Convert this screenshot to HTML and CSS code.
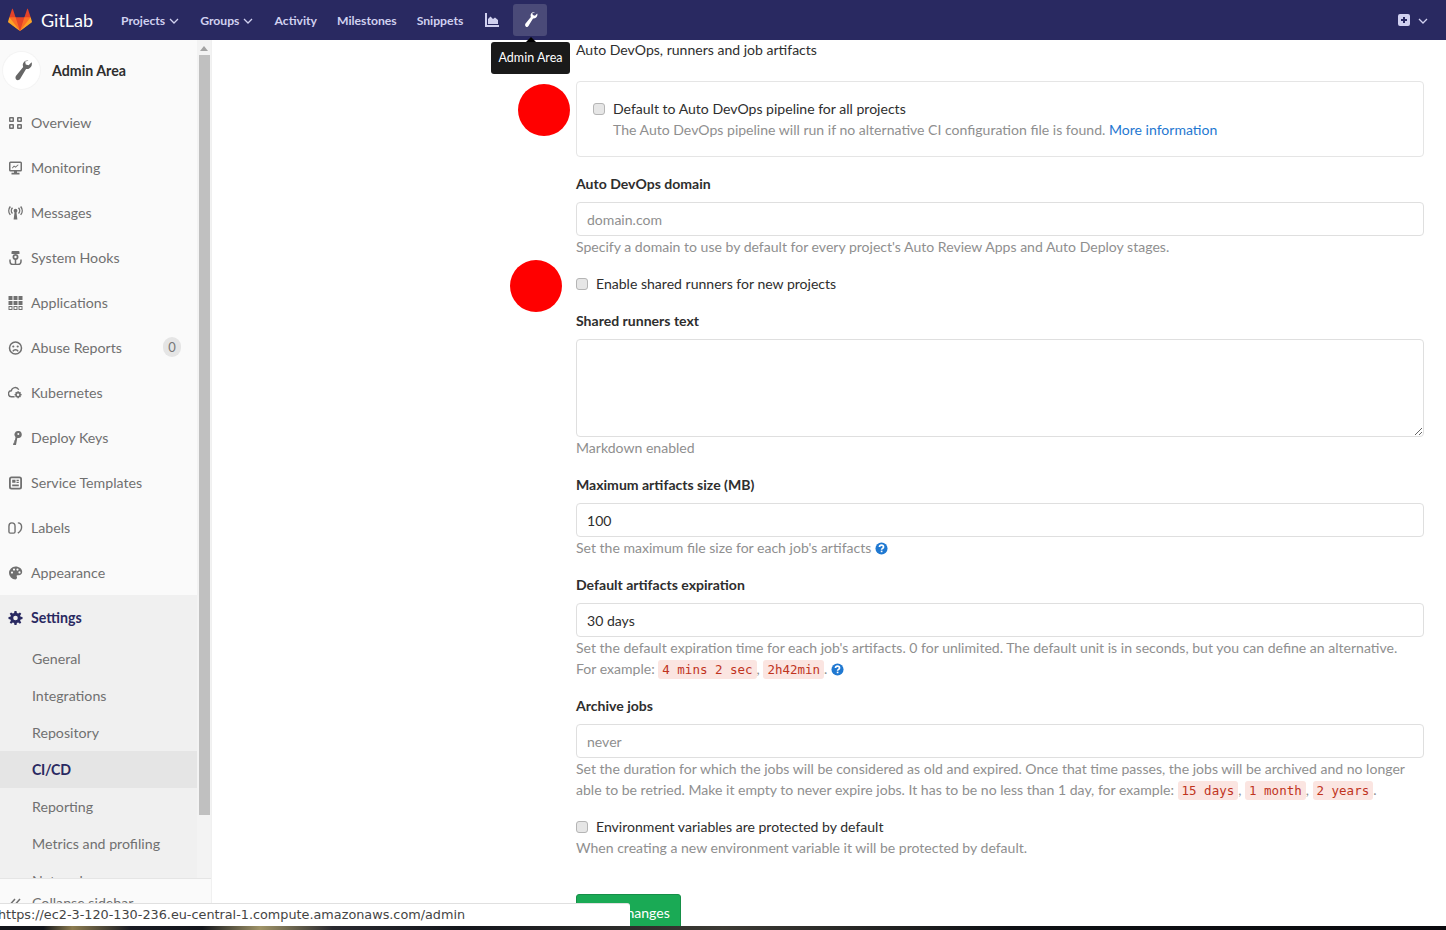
FILE: index.html
```html
<!DOCTYPE html>
<html lang="en">
<head>
    <meta charset="UTF-8">
    <title>Settings · CI/CD · Admin Area · GitLab</title>
    <link rel="stylesheet" href="styles.css">
</head>
<body>
    <header class="navbar">
        <a class="brand">
            <svg class="tanuki" viewBox="0 0 36 36">
                <path fill="#e24329" d="M2 14l9.38 9v-9l-4-12.28c-.205-.632-1.176-.632-1.38 0z"/>
                <path fill="#e24329" d="M34 14l-9.38 9v-9l4-12.28c.205-.632 1.176-.632 1.38 0z"/>
                <path fill="#e24329" d="M18,34.38 3,14 33,14 Z"/>
                <path fill="#fc6d26" d="M18,34.38 11.38,14 2,14 6,25Z"/>
                <path fill="#fc6d26" d="M18,34.38 24.62,14 34,14 30,25Z"/>
                <path fill="#fca326" d="M2 14L.1 20.16c-.18.565 0 1.2.5 1.56l17.42 12.66z"/>
                <path fill="#fca326" d="M34 14l1.9 6.16c.18.565 0 1.2-.5 1.56L18 34.38z"/>
            </svg>
            <span>GitLab</span>
        </a>
        <nav class="nav-links">
            <a class="nav-drop">Projects <svg class="caret" viewBox="0 0 10 6"><path d="M1 1l4 4 4-4"/></svg></a>
            <a class="nav-drop">Groups <svg class="caret" viewBox="0 0 10 6"><path d="M1 1l4 4 4-4"/></svg></a>
            <a>Activity</a>
            <a>Milestones</a>
            <a>Snippets</a>
            <a class="nav-chart">
                <svg viewBox="0 0 14 14"><path d="M0 0h2v12h12v2H0z"/><path d="M3 11V6l2.500-2.500L8 6l2-1.500 3 2.500v4z"/></svg>
            </a>
            <a class="nav-admin">
                <svg viewBox="0 0 16 16"><path d="M12.300 1.100c-1.900-.5-3.700.9-3.800 2.800 0 .5.100 1 .3 1.400L4.600 10.500c-.6.700-1.100 1.300-.9 2.300.2 1.100 1.400 1.700 2.300 1.100.7-.4 1-1.100 1.400-1.800l3.300-5.400c1.700.2 3.400-.900 3.800-2.600.2-.7.100-1.300-.1-1.900l-2 2-1.900-.6-.4-1.900z"/></svg>
            </a>
        </nav>
        <a class="nav-new">
            <svg class="plus" viewBox="0 0 12 12"><path fill-rule="evenodd" d="M2 0h8a2 2 0 0 1 2 2v8a2 2 0 0 1-2 2H2a2 2 0 0 1-2-2V2a2 2 0 0 1 2-2zm3 3v2H3v2h2v2h2V7h2V5H7V3z"/></svg>
            <svg class="caret" viewBox="0 0 10 6"><path d="M1 1l4 4 4-4"/></svg>
        </a>
    </header>

    <div class="page">
        <aside class="sidebar">
            <div class="sidebar-scroll">
                <div class="sidebar-list">
                    <div class="context">
                        <span class="context-avatar">
                            <svg viewBox="0 0 16 16"><path d="M12.300 1.100c-1.900-.5-3.700.9-3.800 2.800 0 .5.100 1 .3 1.400L4.600 10.500c-.6.700-1.100 1.300-.9 2.300.2 1.100 1.400 1.700 2.300 1.100.7-.4 1-1.100 1.400-1.800l3.300-5.400c1.700.2 3.400-.900 3.800-2.600.2-.7.100-1.300-.1-1.900l-2 2-1.900-.6-.4-1.900z"/></svg>
                        </span>
                        <strong>Admin Area</strong>
                    </div>
                    <a class="side-item">
                        <svg viewBox="0 0 14 14"><path fill-rule="evenodd" d="M1.500 1h3a1 1 0 0 1 1 1v3a1 1 0 0 1-1 1h-3a1 1 0 0 1-1-1V2a1 1 0 0 1 1-1zm.5 1.500v2h2v-2zM9.500 1h3a1 1 0 0 1 1 1v3a1 1 0 0 1-1 1h-3a1 1 0 0 1-1-1V2a1 1 0 0 1 1-1zm.5 1.500v2h2v-2zM1.500 8h3a1 1 0 0 1 1 1v3a1 1 0 0 1-1 1h-3a1 1 0 0 1-1-1V9a1 1 0 0 1 1-1zm.5 1.500v2h2v-2zM9.500 8h3a1 1 0 0 1 1 1v3a1 1 0 0 1-1 1h-3a1 1 0 0 1-1-1V9a1 1 0 0 1 1-1zm.5 1.500v2h2v-2z"/></svg>
                        Overview
                    </a>
                    <a class="side-item">
                        <svg viewBox="0 0 14 14"><path fill-rule="evenodd" d="M2 .5h10a1.500 1.500 0 0 1 1.500 1.500v7a1.500 1.500 0 0 1-1.500 1.500H8.500v1.300H11V13.500H3v-1.700h2.500v-1.300H2A1.500 1.500 0 0 1 .5 9V2A1.500 1.500 0 0 1 2 .5zm0 1.500v7h10V2z"/><path d="M3.500 6.800l2-2.200 1.500 1 2.500-2.200.6.700-3 2.700-1.500-1-1.500 1.700z"/></svg>
                        Monitoring
                    </a>
                    <a class="side-item">
                        <svg viewBox="0 0 16 14"><circle cx="8" cy="4.500" r="2"/><path d="M7 6h2l1 8H6z"/><path class="line" d="M4.800 1.500a4.300 4.300 0 0 0 0 6M11.200 1.500a4.300 4.300 0 0 1 0 6M2.500 0a7 7 0 0 0 0 9M13.500 0a7 7 0 0 1 0 9"/></svg>
                        Messages
                    </a>
                    <a class="side-item">
                        <svg viewBox="0 0 14 14"><path d="M4 0h6a1 1 0 0 1 1 1v2H3V1a1 1 0 0 1 1-1z"/><path fill-rule="evenodd" d="M7 3a3 3 0 1 1 0 6 3 3 0 0 1 0-6zm0 1.800a1.200 1.200 0 1 0 0 2.400 1.200 1.200 0 0 0 0-2.400z"/><path class="line" d="M7 8v5.500M1.500 8.500v2a3 3 0 0 0 3 3h5a3 3 0 0 0 3-3v-2" stroke-width="2"/></svg>
                        System Hooks
                    </a>
                    <a class="side-item">
                        <svg viewBox="0 0 14 14"><path d="M0 0h4v4H0zM5 0h4v4H5zM10 0h4v4h-4zM0 5h4v4H0zM5 5h4v4H5zM10 5h4v4h-4z"/><path fill-rule="evenodd" d="M0 10h4v4H0zm1 1v2h2v-2zM5 10h4v4H5zm1 1v2h2v-2zM10 10h4v4h-4zm1 1v2h2v-2z"/></svg>
                        Applications
                    </a>
                    <a class="side-item">
                        <svg viewBox="0 0 14 14"><circle class="line" cx="7" cy="7" r="6"/><circle cx="4.800" cy="5.500" r="1.100"/><circle cx="9.200" cy="5.500" r="1.100"/><path class="line" d="M4.300 10.300a3.200 3.200 0 0 1 5.400 0"/></svg>
                        Abuse Reports
                        <span class="side-badge">0</span>
                    </a>
                    <a class="side-item">
                        <svg viewBox="0 0 16 14"><path class="line" d="M7 11H4a3.200 3.200 0 0 1-.5-6.400A4.300 4.300 0 0 1 11.500 3.500" stroke-width="1.800"/><path fill-rule="evenodd" d="M10 5h1.500l.3 1.100 1-.4 1 1-.5 1 1.200.3v1.500l-1.200.3.500 1-1 1-1-.5-.3 1.200H10l-.3-1.200-1 .5-1-1 .5-1L7 9.500V8l1.200-.3-.5-1 1-1 1 .4zm.7 2.500a1.300 1.300 0 1 0 0 2.600 1.300 1.300 0 0 0 0-2.600z"/></svg>
                        Kubernetes
                    </a>
                    <a class="side-item">
                        <svg viewBox="0 0 14 14"><path fill-rule="evenodd" d="M9.500 0a3.500 3.500 0 0 1 .5 7H8.800L7.500 14H4.500l.5-2 1-1-.5-1 1-1 .5-3A3.500 3.500 0 0 1 9.500 0zm.3 2a1 1 0 1 0 0 2 1 1 0 0 0 0-2z"/></svg>
                        Deploy Keys
                    </a>
                    <a class="side-item">
                        <svg viewBox="0 0 14 14"><path fill-rule="evenodd" d="M3 .5h8A2.500 2.500 0 0 1 13.500 3v8a2.500 2.500 0 0 1-2.500 2.500H3A2.500 2.500 0 0 1 .5 11V3A2.500 2.500 0 0 1 3 .5zM3 2.300a.7.7 0 0 0-.7.7v8a.7.7 0 0 0 .7.7h8a.7.7 0 0 0 .7-.7V3a.7.7 0 0 0-.7-.7zM3.700 3.700h3.300v3H3.700zm4.300 0h2.300V5H8zm0 2h2.300V7H8zM3.700 8.500h6.600v1.700H3.700z"/></svg>
                        Service Templates
                    </a>
                    <a class="side-item">
                        <svg viewBox="0 0 16 14"><path class="line" d="M1 5c0-2 1-3.500 3-3.500S7.500 3 7.500 5v6c0 1-.5 1.500-1.500 1.500H2.500C1.500 12.500 1 12 1 11zM10.500 1.500c2.500 0 4 2 4 4.500s-1.500 5-4 6.500" stroke-width="1.700"/></svg>
                        Labels
                    </a>
                    <a class="side-item">
                        <svg viewBox="0 0 14 14"><path fill-rule="evenodd" d="M7 .5c3.700 0 6.700 2.300 6.700 5.500 0 2-1.600 3.200-3.400 3.200H8.900c-.8 0-1.100.8-.6 1.400.6.800.1 2.900-1.300 2.900A6.500 6.500 0 0 1 7 .5zM3.500 5.500a1.100 1.100 0 1 0 0 2.200 1.100 1.100 0 0 0 0-2.200zm2-3a1.100 1.100 0 1 0 0 2.200 1.100 1.100 0 0 0 0-2.200zm3.500 0a1.100 1.100 0 1 0 0 2.200 1.100 1.100 0 0 0 0-2.200zm2 2.800a1.100 1.100 0 1 0 0 2.200 1.100 1.100 0 0 0 0-2.200z"/></svg>
                        Appearance
                    </a>
                    <div class="side-group">
                        <a class="side-item side-item-active">
                            <svg viewBox="0 0 14 14"><path fill-rule="evenodd" d="M6 0h2l.4 2 1.300.5L11.400 1.400 12.800 2.800 11.600 4.500l.5 1.300 1.900.3v2l-1.900.4-.5 1.200 1.200 1.700-1.400 1.400-1.700-1.200-1.300.5L8 14H6l-.4-1.900-1.300-.5-1.700 1.200-1.400-1.400 1.200-1.700-.5-1.200L0 8.100v-2l1.900-.3.500-1.300L1.200 2.800 2.600 1.400l1.700 1.100L5.600 2zM7 4.700a2.300 2.300 0 1 0 0 4.600 2.300 2.300 0 0 0 0-4.600z"/></svg>
                            Settings
                        </a>
                        <a class="sub-item">General</a>
                        <a class="sub-item">Integrations</a>
                        <a class="sub-item">Repository</a>
                        <a class="sub-item sub-item-active">CI/CD</a>
                        <a class="sub-item">Reporting</a>
                        <a class="sub-item">Metrics and profiling</a>
                        <a class="sub-item">Network</a>
                    </div>
                </div>
                <div class="scrollbar">
                    <span class="scroll-arrow"></span>
                    <span class="scroll-thumb"></span>
                </div>
            </div>
            <div class="collapse-row">
                <svg viewBox="0 0 14 14"><path class="line" d="M7 3L3 7.500 7 12M12 3L8 7.500l4 4.500"/></svg>
                Collapse sidebar
            </div>
        </aside>

        <main class="content">
            <form class="settings-form">
                <p class="intro">Auto DevOps, runners and job artifacts</p>

                <div class="check-box">
                    <label class="check-row">
                        <input type="checkbox">
                        Default to Auto DevOps pipeline for all projects
                    </label>
                    <p class="help box-help">The Auto DevOps pipeline will run if no alternative CI configuration file is found. <a>More information</a></p>
                </div>

                <div class="form-group">
                    <label class="field-label">Auto DevOps domain</label>
                    <input class="field" type="text" placeholder="domain.com">
                    <p class="help">Specify a domain to use by default for every project's Auto Review Apps and Auto Deploy stages.</p>
                </div>

                <div class="form-group">
                    <label class="check-row"><input type="checkbox"> Enable shared runners for new projects</label>
                </div>

                <div class="form-group">
                    <label class="field-label">Shared runners text</label>
                    <textarea class="field field-area"></textarea>
                    <p class="help">Markdown enabled</p>
                </div>

                <div class="form-group">
                    <label class="field-label">Maximum artifacts size (MB)</label>
                    <input class="field" type="text" value="100">
                    <p class="help">Set the maximum file size for each job's artifacts
                        <svg class="help-icon" viewBox="0 0 14 14"><circle cx="7" cy="7" r="6.500"/><path class="mark" d="M4.800 5.400C4.900 4 5.900 3.400 7 3.400c1.300 0 2.200.8 2.200 1.900 0 1.600-2.100 1.500-2.100 3"/><rect class="dot" x="6.200" y="9.300" width="1.800" height="1.700"/></svg>
                    </p>
                </div>

                <div class="form-group">
                    <label class="field-label">Default artifacts expiration</label>
                    <input class="field" type="text" value="30 days">
                    <p class="help">Set the default expiration time for each job's artifacts. 0 for unlimited. The default unit is in seconds, but you can define an alternative.<br>
                        For example: <code>4 mins 2 sec</code>, <code>2h42min</code>.
                        <svg class="help-icon" viewBox="0 0 14 14"><circle cx="7" cy="7" r="6.500"/><path class="mark" d="M4.800 5.400C4.900 4 5.900 3.400 7 3.400c1.300 0 2.200.8 2.200 1.900 0 1.600-2.100 1.500-2.100 3"/><rect class="dot" x="6.200" y="9.300" width="1.800" height="1.700"/></svg>
                    </p>
                </div>

                <div class="form-group">
                    <label class="field-label">Archive jobs</label>
                    <input class="field" type="text" placeholder="never">
                    <p class="help">Set the duration for which the jobs will be considered as old and expired. Once that time passes, the jobs will be archived and no longer<br>
                        able to be retried. Make it empty to never expire jobs. It has to be no less than 1 day, for example: <code>15 days</code>, <code>1 month</code>, <code>2 years</code>.</p>
                </div>

                <div class="form-group">
                    <label class="check-row"><input type="checkbox"> Environment variables are protected by default</label>
                    <p class="help">When creating a new environment variable it will be protected by default.</p>
                </div>

                <button class="save-btn" type="button">Save changes</button>
            </form>
        </main>
    </div>

    <div class="tooltip">Admin Area</div>
    <span class="red-dot red-dot-one"></span>
    <span class="red-dot red-dot-two"></span>
    <div class="status-bar">https://ec2-3-120-130-236.eu-central-1.compute.amazonaws.com/admin</div>
    <div class="desktop-strip"></div>
</body>
</html>
```

FILE: styles.css
```css
* {
    box-sizing: border-box;
}
html, body {
    height: 930px;
    overflow: hidden;
}
body {
    display: flex;
    flex-direction: column;
    position: relative;
    margin: 0;
    font-family: Lato, sans-serif;
    font-size: 14.05px;
    line-height: 21px;
    color: #2e2e2e;
    background: #fff;
}
p {
    margin: 0;
}

/* top bar */
.navbar {
    display: flex;
    align-items: center;
    flex: 0 0 40px;
    padding: 0 16px 0 8px;
    background: #292961;
}
.brand {
    display: flex;
    align-items: center;
    gap: 9px;
    width: 113px;
    color: #fff;
    font-size: 18px;
}
.tanuki {
    width: 24px;
    height: 24px;
}
.nav-links {
    display: flex;
    align-items: center;
}
.nav-links a {
    display: flex;
    align-items: center;
    gap: 4px;
    margin-right: 20px;
    color: #d1d1f0;
    font-size: 12.2px;
    font-weight: 700;
}
.nav-links .nav-drop {
    margin-right: 21px;
}
.caret {
    width: 10px;
    height: 6px;
    margin-top: 2px;
    fill: none;
    stroke: #d1d1f0;
    stroke-width: 1.300;
}
.nav-links .nav-chart {
    margin-left: 2px;
    margin-right: 14px;
}
.nav-chart svg {
    width: 14px;
    height: 14px;
    fill: #d1d1f0;
}
.nav-links .nav-admin {
    justify-content: center;
    width: 34px;
    height: 32px;
    margin: 0;
    border-radius: 3px;
    background: #4a4a78;
}
.nav-admin svg {
    width: 18px;
    height: 18px;
    fill: #fff;
}
.nav-new {
    display: flex;
    align-items: center;
    gap: 8px;
    margin-left: auto;
    padding-right: 2px;
}
.plus {
    width: 12px;
    height: 12px;
    fill: #d1d1f0;
}

/* page */
.page {
    display: flex;
    flex: 1;
    min-height: 0;
}
.sidebar {
    display: flex;
    flex-direction: column;
    flex: 0 0 212px;
    border-right: 1px solid #f0f0f0;
    background: #fafafa;
    font-size: 14.2px;
}
.sidebar-scroll {
    display: flex;
    flex: 1;
    min-height: 0;
    overflow: hidden;
}
.sidebar-list {
    flex: 1;
    min-width: 0;
}
.context {
    display: flex;
    align-items: center;
    gap: 12px;
    height: 60px;
    padding: 1px 0 0 3px;
}
.context strong {
    color: #2e2e2e;
    font-weight: 700;
}
.context-avatar {
    display: flex;
    align-items: center;
    justify-content: center;
    width: 37px;
    height: 37px;
    border-radius: 50%;
    background: #fff;
    box-shadow: 0 0 0 1px #f4f4f4;
}
.context-avatar svg {
    width: 24px;
    height: 24px;
    fill: #666;
}
.side-item {
    display: flex;
    align-items: center;
    height: 45px;
    padding-left: 8px;
    color: #707070;
}
.side-item svg {
    flex: 0 0 15px;
    width: 15px;
    height: 14px;
    margin-right: 8px;
    fill: #707070;
}
.line {
    fill: none;
    stroke: #707070;
    stroke-width: 1.500;
}
.side-badge {
    margin: -1px 16px 0 auto;
    width: 18px;
    height: 20px;
    border-radius: 9px;
    background: #e5e5e5;
    color: #777;
    font-size: 13px;
    line-height: 20px;
    text-align: center;
}
.side-group {
    background: #f0f0f0;
}
.side-item-active {
    color: #292961;
    font-weight: 700;
}
.side-item-active svg {
    fill: #292961;
}
.sub-item {
    display: block;
    height: 37px;
    padding-left: 32px;
    color: #707070;
    line-height: 37px;
}
.sub-item-active {
    background: #e5e5e5;
    color: #292961;
    font-weight: 700;
    letter-spacing: -.3px;
}
.scrollbar {
    display: flex;
    flex-direction: column;
    align-items: center;
    flex: 0 0 14px;
    background: #f3f3f3;
}
.scroll-arrow {
    width: 0;
    height: 0;
    margin: 6px 0 4px;
    border-left: 4px solid transparent;
    border-right: 4px solid transparent;
    border-bottom: 5px solid #a3a3a3;
}
.scroll-thumb {
    flex: none;
    width: 11px;
    height: 760px;
    background: #c0c0c0;
}
.collapse-row {
    display: flex;
    align-items: center;
    gap: 10px;
    flex: 0 0 52px;
    padding: 0 0 4px 8px;
    border-top: 1px solid #e5e5e5;
    color: #707070;
}
.collapse-row svg {
    width: 14px;
    height: 14px;
}

/* form */
.content {
    flex: 1;
    min-width: 0;
    overflow: hidden;
}
.settings-form {
    width: 848px;
    margin-left: 364px;
}
.intro {
    margin-bottom: 21px;
    line-height: 20px;
}
.check-box {
    height: 76px;
    margin-bottom: 16px;
    padding: 16px 16px 0;
    border: 1px solid #e5e5e5;
    border-radius: 4px;
}
.check-row {
    display: flex;
    align-items: center;
    gap: 8px;
}
.check-row input {
    appearance: none;
    width: 12px;
    height: 12px;
    margin: 0;
    border: 1px solid #b5b5b5;
    border-radius: 3px;
    background: #e6e6e6;
}
.box-help {
    padding-left: 20px;
}
.form-group {
    margin-bottom: 16px;
}
.field-label {
    display: block;
    margin-bottom: 8px;
    font-weight: 700;
}
.field {
    display: block;
    width: 100%;
    height: 34px;
    padding: 1px 10px 0;
    border: 1px solid #dfdfdf;
    border-radius: 4px;
    color: #2e2e2e;
    font-family: inherit;
    font-size: 14.05px;
}
.field::placeholder {
    color: #8f8f8f;
}
.field-area {
    height: 98px;
}
.help {
    color: #8f8f8f;
}
.help a {
    color: #1f78d1;
}
code {
    padding: 2px 4px;
    border-radius: 3px;
    background: #fbe5e1;
    color: #c0341d;
    font-family: "DejaVu Sans Mono", monospace;
    font-size: 12.5px;
    line-height: 1;
}
.help-icon {
    width: 13px;
    height: 13px;
    vertical-align: -2px;
    fill: #1f78d1;
}
.help-icon .mark {
    fill: none;
    stroke: #fff;
    stroke-width: 1.800;
}
.help-icon .dot {
    fill: #fff;
}
.save-btn {
    display: block;
    width: 105px;
    height: 36px;
    margin-top: 36px;
    padding: 0;
    border: 1px solid #168f48;
    border-radius: 3px;
    background: #1aaa55;
    color: #fff;
    font-family: inherit;
    font-size: 14.05px;
}

/* things lying over the page */
.tooltip {
    position: absolute;
    top: 42px;
    left: 491px;
    width: 79px;
    height: 32px;
    border-radius: 3px;
    background: #1a1a1a;
    color: #fff;
    font-size: 12.5px;
    line-height: 32px;
    text-align: center;
}
.tooltip::before {
    content: "";
    position: absolute;
    top: -5px;
    left: 35px;
    border-left: 5px solid transparent;
    border-right: 5px solid transparent;
    border-bottom: 5px solid #000;
}
.red-dot {
    position: absolute;
    width: 52px;
    height: 52px;
    border-radius: 50%;
    background: #f00;
}
.red-dot-one {
    top: 84px;
    left: 518px;
}
.red-dot-two {
    top: 260px;
    left: 510px;
}
.status-bar {
    position: absolute;
    bottom: 4px;
    left: 0;
    width: 630px;
    height: 23px;
    border-top: 1px solid #e0e0e0;
    border-top-right-radius: 3px;
    background: #fff;
    color: #444;
    font-family: "DejaVu Sans", sans-serif;
    font-size: 12.800px;
    line-height: 21px;
    text-indent: -2px;
    white-space: nowrap;
}
.desktop-strip {
    position: absolute;
    bottom: 0;
    left: 0;
    width: 100%;
    height: 4px;
    background: linear-gradient(90deg, #14161c 0, #14161c 3%, #8c7c50 5%, #1a1c24 9%, #14161c 14%, #a09468 18%, #2a2a30 23%, #14161c 32%, #3c3a34 50%, #0e1014 70%, #0a0a0e 100%);
}
```
